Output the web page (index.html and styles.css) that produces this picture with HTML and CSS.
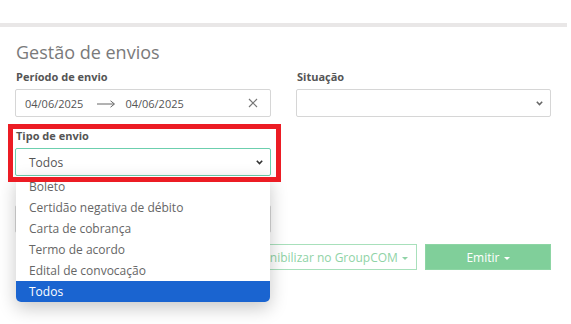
FILE: index.html
```html
<!DOCTYPE html>
<html lang="pt-BR">
<head>
    <meta charset="UTF-8">
    <meta name="viewport" content="width=device-width, initial-scale=1.0">
    <title>Gestão de envios</title>
    <link rel="stylesheet" href="styles.css">
</head>
<body>

    <!-- Top bar -->
    <div class="topbar"></div>
    <div class="divider"></div>

    <!-- Main Content -->
    <div class="page">
        <h1>Gestão de envios</h1>

        <div class="filters">
            <div class="field">
                <label>Período de envio</label>
                <div class="input date-range">
                    <span>04/06/2025</span>
                    <svg class="arrow" width="19" height="8" viewBox="0 0 19 8"><path d="M0 4h17M13.5 0.8L17.5 4l-4 3.2" fill="none" stroke="#666" stroke-width="1"/></svg>
                    <span>04/06/2025</span>
                    <svg class="clear" width="10" height="10" viewBox="0 0 10 10"><path d="M1 1l8 8M9 1l-8 8" stroke="#777" stroke-width="1.2"/></svg>
                </div>
            </div>

            <div class="field">
                <label>Situação</label>
                <div class="input select">
                    <span></span>
                    <svg class="chevron" width="7" height="5" viewBox="0 0 7 5"><path d="M0.8 0.8L3.5 3.6 6.2 0.8" fill="none" stroke="#666" stroke-width="1.5"/></svg>
                </div>
            </div>

            <div class="field highlight">
                <label>Tipo de envio</label>
                <div class="input select active">
                    <span>Todos</span>
                    <svg class="chevron" width="7" height="5" viewBox="0 0 7 5"><path d="M0.8 0.8L3.5 3.6 6.2 0.8" fill="none" stroke="#333" stroke-width="1.6"/></svg>
                </div>
                <ul class="options">
                    <li>Boleto</li>
                    <li>Certidão negativa de débito</li>
                    <li>Carta de cobrança</li>
                    <li>Termo de acordo</li>
                    <li>Edital de convocação</li>
                    <li class="selected">Todos</li>
                </ul>
                <div class="marker"></div>
            </div>
            <div></div>

            <!-- field under the open list -->
            <div class="field covered">
                <div class="input"></div>
            </div>
        </div>

        <div class="actions">
            <button class="btn-outline">Disponibilizar no GroupCOM <span class="caret"></span></button>
            <button class="btn-primary">Emitir <span class="caret"></span></button>
        </div>
    </div>

</body>
</html>
```

FILE: styles.css
```css
body {
    font-family: "Open Sans", "Noto Sans", Arial, sans-serif;
    margin: 0;
    padding: 0;
    min-height: 324px;
    background: #fff;
    color: #555;
}

.topbar { height: 23px; }
.divider {
    height: 4px;
    width: 567px;
    background: #e9e7e7;
}

/* Main Content */
.page {
    width: 536px;
    padding: 0 20px 0 15px;
}

h1 {
    font-size: 18px;
    font-weight: 400;
    color: #7a7a7a;
    margin: 13px 0 5px 1px;
    line-height: 24px;
}

.filters {
    display: grid;
    grid-template-columns: 256px 255px;
    column-gap: 25px;
    row-gap: 11px;
}

.field { position: relative; }
.field label {
    display: block;
    font-size: 11px;
    font-weight: 700;
    color: #555;
    line-height: 16px;
    margin: 0 0 4px 1px;
}
.field.covered { padding-top: 18px; }

.input {
    height: 28px;
    box-sizing: border-box;
    border: 1px solid #d6d6d6;
    border-radius: 2px;
    background: #fff;
    display: flex;
    align-items: center;
    font-size: 11px;
    color: #555;
}

.date-range { padding: 0 12px 0 9px; }
.date-range .arrow { margin: 1px 9px 0 14px; }
.date-range .clear { margin-left: auto; }

.select { padding: 0 7px 0 13px; }
.select span { flex: 1; }
.select.active {
    border-color: #6ccfae;
    font-size: 12px;
    color: #555;
}

/* Dropdown list */
.options {
    position: absolute;
    top: 48px;
    left: 1px;
    width: 254px;
    margin: 0;
    padding: 0;
    list-style: none;
    background: #fff;
    border-radius: 0 0 5px 5px;
    box-shadow: 0 6px 18px rgba(0, 0, 0, 0.22);
    overflow: hidden;
    z-index: 5;
}
.options li {
    height: 21px;
    line-height: 21px;
    padding-left: 13px;
    font-size: 12px;
    color: #666;
}
.options li.selected {
    background: #1a64d0;
    color: #fff;
}

/* Highlight box */
.marker {
    position: absolute;
    left: -7px;
    top: -4px;
    width: 273px;
    height: 58px;
    box-sizing: border-box;
    border: 5px solid #ec1c24;
    z-index: 10;
}

.actions {
    display: flex;
    justify-content: flex-end;
    gap: 8px;
    margin-top: 11px;
}
.actions button {
    height: 26px;
    font-family: inherit;
    font-size: 12px;
    border-radius: 0;
    cursor: pointer;
}
.btn-outline {
    background: #fff;
    border: 1px solid #a8e0bb;
    color: #8fd3a6;
    padding: 0 8px;
}
.btn-primary {
    width: 126px;
    background: #80cf9a;
    border: 1px solid #8dd5a4;
    color: #fff;
}
.caret {
    display: inline-block;
    width: 0;
    height: 0;
    border-left: 3px solid transparent;
    border-right: 3px solid transparent;
    border-top: 3px solid currentColor;
    vertical-align: middle;
    margin-left: 1px;
}
```
